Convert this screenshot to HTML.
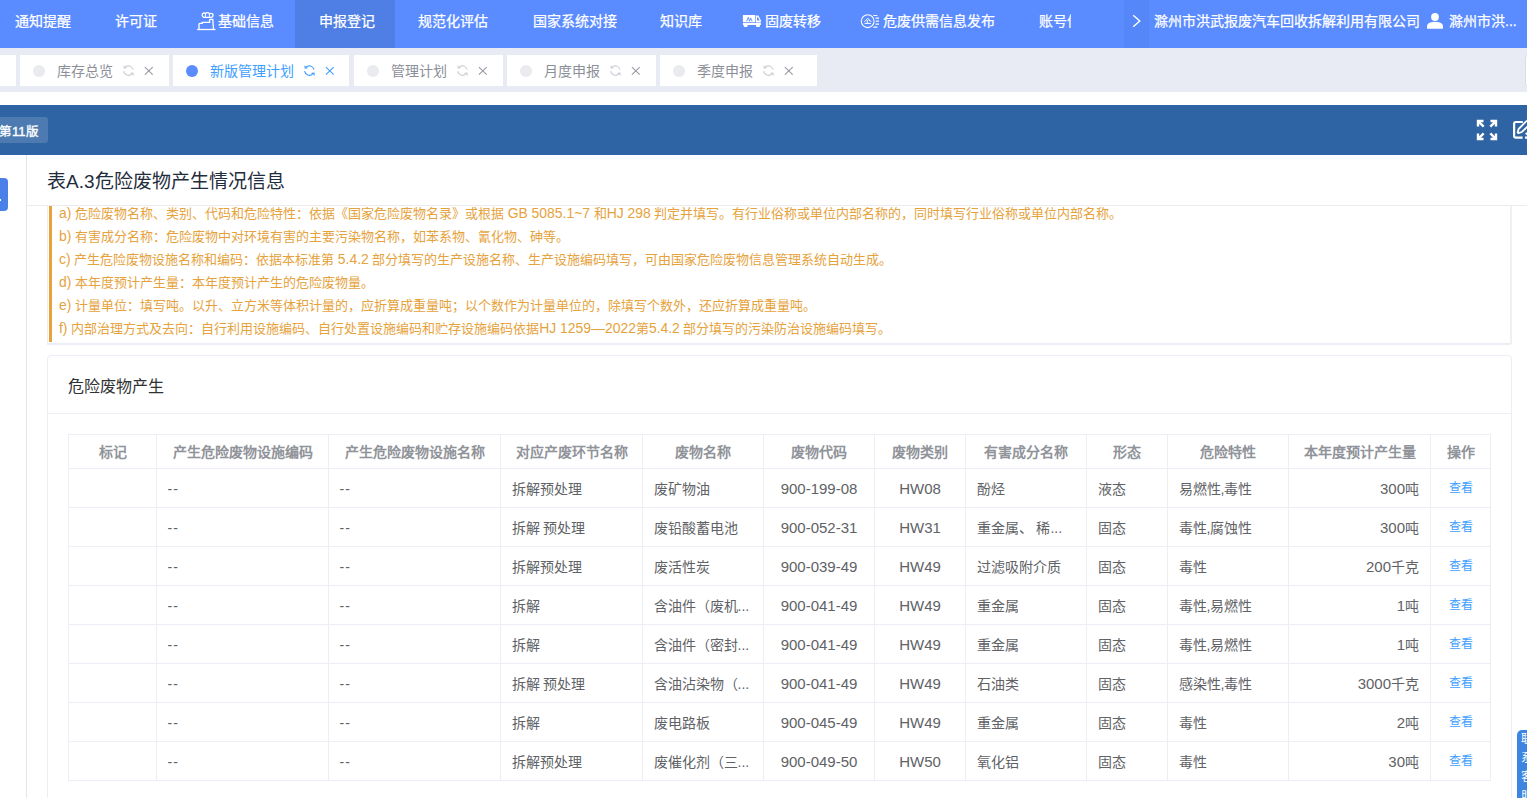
<!DOCTYPE html>
<html lang="zh-CN"><head><meta charset="utf-8"><title>page</title>
<style>
*{box-sizing:border-box;margin:0;padding:0}
html,body{width:1527px;height:798px;overflow:hidden;background:#fff}
body{position:relative;font-family:"Liberation Sans",sans-serif;font-size:14px;color:#606266}
.abs{position:absolute;white-space:nowrap}
#nav{position:absolute;left:0;top:0;width:1527px;height:48px;background:#5a8bff}
.nav{position:absolute;top:-3px;height:48px;line-height:48px;white-space:nowrap;-webkit-text-stroke:0.25px #fff;color:#fff;font-size:14px}
#tabs{position:absolute;left:0;top:48px;width:1527px;height:44px;background:#e8ebf3}
.tab{position:absolute;top:7px;height:31px;background:#fff}
.tab .dot{position:absolute;left:13px;top:10px;width:12px;height:12px;border-radius:50%;background:#eaebef}
.tab .tt{position:absolute;left:37px;top:0.5px;line-height:31px;font-size:14px;color:#8c8c8c}
.tab svg{position:absolute;top:0}
#bar{position:absolute;left:0;top:105px;width:1527px;height:50px;background:#2e64a4}
.cell{position:absolute;display:flex;align-items:center;white-space:nowrap;overflow:hidden}
.hl{position:absolute;height:1px;background:#ebeef5}
.vl{position:absolute;width:1px;background:#ebeef5}
.l{font-size:1.072em;}
.note{position:absolute;left:59px;font-size:13px;color:#e6a23c;line-height:23px;white-space:nowrap}
</style></head><body>

<div id="nav">
<div class="abs" style="left:295px;top:0;width:100px;height:48px;background:#4f7ee4"></div>
<div class="abs" style="left:1124px;top:0;width:25px;height:48px;background:#5587f8"></div>
<div class="nav" style="left:15px">通知提醒</div>
<div class="nav" style="left:115px">许可证</div>
<div class="nav" style="left:218px">基础信息</div>
<div class="nav" style="left:319px">申报登记</div>
<div class="nav" style="left:418px">规范化评估</div>
<div class="nav" style="left:533px">国家系统对接</div>
<div class="nav" style="left:660px">知识库</div>
<div class="nav" style="left:765px">固废转移</div>
<div class="nav" style="left:883px">危废供需信息发布</div>
<div class="nav" style="left:1039px;width:32px;overflow:hidden">账号信息</div>
<div class="nav" style="left:1154px">滁州市洪武报废汽车回收拆解利用有限公司</div>
<div class="nav" style="left:1449px">滁州市洪...</div>
<svg class="abs" style="left:192px;top:8px" width="30" height="30" viewBox="0 0 30 30" fill="none" stroke="#fff" stroke-width="1.3">
<path d="M5.2 21.5H23.5"/><path d="M7 21.5V16.2Q7 15.3 8 15.3H10.3V14.3H17.6V12Q17.6 11.3 18.5 11.3H20.8L21.5 21.5"/>
<path d="M11.8 9.3A2.3 2.3 0 0 1 11.8 4.9Q12.9 4.9 13.4 5.6Q14.1 4.6 15.4 4.6Q16.8 4.6 17.4 5.7Q18 5.3 18.9 5.3A2 2 0 0 1 19.2 9.3Z"/><path d="M13.4 5.6V9.3M17.4 5.7V9.3" stroke-width="1"/></svg>
<svg class="abs" style="left:738px;top:8px" width="30" height="30" viewBox="0 0 30 30">
<path fill="#fff" d="M5.4 7H17.2V14.3H4.9V7.5Q4.9 7 5.4 7Z"/>
<path fill="#fff" d="M17.8 7.4H20.3L22.9 12.2V14.4H17.8Z"/>
<path fill="#5a8bff" d="M19 9.2H20L21.6 12.6H19Z"/>
<path fill="none" stroke="#5a8bff" stroke-width="0.9" d="M8.6 13.3L10.3 9.2L11.6 13.3M11.4 13.3L12.7 9.9L14 13.3"/>
<rect x="4.9" y="14.9" width="18" height="2.1" rx="0.5" fill="#fff"/>
<rect x="5.6" y="16.5" width="4" height="2.4" rx="1" fill="#fff"/><rect x="18" y="16.5" width="4" height="2.4" rx="1" fill="#fff"/>
</svg>
<svg class="abs" style="left:856px;top:8px" width="30" height="30" viewBox="0 0 30 30" fill="none" stroke="#fff" stroke-width="1.1">
<circle cx="11.7" cy="13.2" r="6.4"/>
<path d="M8.4 13.8L11.8 10.3L15.2 13.8M11.3 12.2V15.3M12.6 12.2L14 12.9M8.6 15.4H15" stroke-width="1"/>
<path d="M17.3 7.5H21.3M19.5 10.1H23M19.8 13.2H23M19.5 16.2H23M17.3 19.2H21.3" stroke-width="1.2"/>
</svg>
<svg class="abs" style="left:1128px;top:12px" width="18" height="22" viewBox="0 0 18 22" fill="none" stroke="#fff" stroke-width="1.4"><path d="M5.2 3.2L11.8 9L5.2 14.8"/></svg>
<svg class="abs" style="left:1425px;top:10px" width="20" height="22" viewBox="0 0 20 22" fill="#fff"><circle cx="10" cy="7" r="3.9"/><path d="M2 18.7V16.5Q2 13.2 6 12.2Q8 11.7 10 11.7Q12 11.7 14 12.2Q18 13.2 18 16.5V18.7Z"/></svg>
</div>
<div id="tabs">
<div class="tab" style="left:-133px;width:149px"><div class="dot" style="background:#eaebef"></div><div class="tt" style="color:#8b8f98">库存总览</div>
<svg style="left:103px" width="14" height="31" viewBox="0 0 14 31" fill="none" stroke="#c9cdd4" stroke-width="1.1"><path d="M1.7 12.4A4.9 4.9 0 0 1 10 14.6"/><path d="M0.9 10.7L1.2 13.1L3.6 12.7"/><path d="M0.6 16.2A4.9 4.9 0 0 0 8.7 19.1"/><path d="M10.2 20.6L10 18.1L7.6 18.4"/></svg>
<svg style="left:123px" width="12" height="31" viewBox="0 0 12 31" fill="none" stroke="#959aa3" stroke-width="1.1"><path d="M1.9 12.1L9.7 19.6M9.7 12.1L1.9 19.6"/></svg>
</div>
<div class="tab" style="left:20px;width:149px"><div class="dot" style="background:#eaebef"></div><div class="tt" style="color:#8b8f98">库存总览</div>
<svg style="left:103px" width="14" height="31" viewBox="0 0 14 31" fill="none" stroke="#c9cdd4" stroke-width="1.1"><path d="M1.7 12.4A4.9 4.9 0 0 1 10 14.6"/><path d="M0.9 10.7L1.2 13.1L3.6 12.7"/><path d="M0.6 16.2A4.9 4.9 0 0 0 8.7 19.1"/><path d="M10.2 20.6L10 18.1L7.6 18.4"/></svg>
<svg style="left:123px" width="12" height="31" viewBox="0 0 12 31" fill="none" stroke="#959aa3" stroke-width="1.1"><path d="M1.9 12.1L9.7 19.6M9.7 12.1L1.9 19.6"/></svg>
</div>
<div class="tab" style="left:173px;width:176px"><div class="dot" style="background:#5a8bff"></div><div class="tt" style="color:#409eff">新版管理计划</div>
<svg style="left:131px" width="14" height="31" viewBox="0 0 14 31" fill="none" stroke="#409eff" stroke-width="1.1"><path d="M1.7 12.4A4.9 4.9 0 0 1 10 14.6"/><path d="M0.9 10.7L1.2 13.1L3.6 12.7"/><path d="M0.6 16.2A4.9 4.9 0 0 0 8.7 19.1"/><path d="M10.2 20.6L10 18.1L7.6 18.4"/></svg>
<svg style="left:151px" width="12" height="31" viewBox="0 0 12 31" fill="none" stroke="#409eff" stroke-width="1.1"><path d="M1.9 12.1L9.7 19.6M9.7 12.1L1.9 19.6"/></svg>
</div>
<div class="tab" style="left:354px;width:149px"><div class="dot" style="background:#eaebef"></div><div class="tt" style="color:#8b8f98">管理计划</div>
<svg style="left:103px" width="14" height="31" viewBox="0 0 14 31" fill="none" stroke="#c9cdd4" stroke-width="1.1"><path d="M1.7 12.4A4.9 4.9 0 0 1 10 14.6"/><path d="M0.9 10.7L1.2 13.1L3.6 12.7"/><path d="M0.6 16.2A4.9 4.9 0 0 0 8.7 19.1"/><path d="M10.2 20.6L10 18.1L7.6 18.4"/></svg>
<svg style="left:123px" width="12" height="31" viewBox="0 0 12 31" fill="none" stroke="#959aa3" stroke-width="1.1"><path d="M1.9 12.1L9.7 19.6M9.7 12.1L1.9 19.6"/></svg>
</div>
<div class="tab" style="left:507px;width:149px"><div class="dot" style="background:#eaebef"></div><div class="tt" style="color:#8b8f98">月度申报</div>
<svg style="left:103px" width="14" height="31" viewBox="0 0 14 31" fill="none" stroke="#c9cdd4" stroke-width="1.1"><path d="M1.7 12.4A4.9 4.9 0 0 1 10 14.6"/><path d="M0.9 10.7L1.2 13.1L3.6 12.7"/><path d="M0.6 16.2A4.9 4.9 0 0 0 8.7 19.1"/><path d="M10.2 20.6L10 18.1L7.6 18.4"/></svg>
<svg style="left:123px" width="12" height="31" viewBox="0 0 12 31" fill="none" stroke="#959aa3" stroke-width="1.1"><path d="M1.9 12.1L9.7 19.6M9.7 12.1L1.9 19.6"/></svg>
</div>
<div class="tab" style="left:660px;width:157px"><div class="dot" style="background:#eaebef"></div><div class="tt" style="color:#8b8f98">季度申报</div>
<svg style="left:103px" width="14" height="31" viewBox="0 0 14 31" fill="none" stroke="#c9cdd4" stroke-width="1.1"><path d="M1.7 12.4A4.9 4.9 0 0 1 10 14.6"/><path d="M0.9 10.7L1.2 13.1L3.6 12.7"/><path d="M0.6 16.2A4.9 4.9 0 0 0 8.7 19.1"/><path d="M10.2 20.6L10 18.1L7.6 18.4"/></svg>
<svg style="left:123px" width="12" height="31" viewBox="0 0 12 31" fill="none" stroke="#959aa3" stroke-width="1.1"><path d="M1.9 12.1L9.7 19.6M9.7 12.1L1.9 19.6"/></svg>
</div>
<div class="abs" style="left:1525px;top:6px;width:10px;height:33px;border:1px solid #d8dce5;border-radius:4px;background:#fff"></div>
</div>
<div id="bar">
<div class="abs" style="left:-4px;top:12px;width:52px;height:26px;border-radius:3px;background:rgba(255,255,255,0.15)"></div>
<div class="abs" style="left:-1px;top:13.5px;height:26px;line-height:26px;font-size:12.5px;-webkit-text-stroke:0.35px #fff;color:#fff">第<span style="font-size:13px">11</span>版</div>
<svg class="abs" style="left:1475px;top:13px" width="24" height="24" viewBox="0 0 24 24" fill="none" stroke="#fff" stroke-width="2.4">
<path d="M3 8.5V3H8.5M3 3L8.7 8.7"/><path d="M15.5 3H21V8.5M21 3L15.3 8.7"/><path d="M3 15.5V21H8.5M3 21L8.7 15.3"/><path d="M21 15.5V21H15.5M21 21L15.3 15.3"/></svg>
<svg class="abs" style="left:1507px;top:8px" width="20" height="32" viewBox="0 0 20 32" fill="none" stroke="#fff" stroke-width="2.2">
<path d="M15.8 9H9Q7.1 9 7.1 10.9V22.7Q7.1 24.6 9 24.6H15.6M18 24.6H21"/><path d="M10.5 20.3L11.6 16L20 7.6M10.5 20.3L14.9 19L21.5 12.4" stroke-width="1.8"/><path d="M18.6 20L20.5 21.5" stroke-width="1.8"/></svg>
</div>
<div class="abs" style="left:26px;top:155px;width:1px;height:643px;background:#e6e6e6"></div>
<div class="abs" style="left:-4px;top:178px;width:12px;height:33px;border-radius:4px;background:#4a80e8"></div>
<div class="abs" style="left:0;top:198.5px;width:1.3px;height:2px;background:#fff"></div>
<div class="abs" style="left:47px;top:170px;font-size:19px;line-height:24px;color:#1f2d3d">表A.3危险废物产生情况信息</div>
<div class="abs" style="left:27px;top:205px;width:1500px;height:1px;background:#ececec"></div>
<div class="abs" style="left:47px;top:206px;width:1464px;height:138px;border-left:1px solid #ebeef5"></div>
<div class="abs" style="left:49px;top:206px;width:3px;height:136px;background:#e6a23c"></div>
<div class="abs" style="left:47px;top:343px;width:1464px;height:2px;background:#ebeef5"></div>
<div class="abs" style="left:1510px;top:206px;width:2px;height:138px;background:#f0f0f0"></div>
<div class="note" style="top:202px"><span class="l">a)</span> 危险废物名称、类别、代码和危险特性：依据《国家危险废物名录》或根据 <span class="l">GB 5085.1~7</span> 和<span class="l">HJ 298</span> 判定并填写。有行业俗称或单位内部名称的，同时填写行业俗称或单位内部名称。</div>
<div class="note" style="top:225px"><span class="l">b)</span> 有害成分名称：危险废物中对环境有害的主要污染物名称，如苯系物、氰化物、砷等。</div>
<div class="note" style="top:248px"><span class="l">c)</span> 产生危险废物设施名称和编码：依据本标准第 <span class="l">5.4.2</span> 部分填写的生产设施名称、生产设施编码填写，可由国家危险废物信息管理系统自动生成。</div>
<div class="note" style="top:271px"><span class="l">d)</span> 本年度预计产生量：本年度预计产生的危险废物量。</div>
<div class="note" style="top:294px"><span class="l">e)</span> 计量单位：填写吨。以升、立方米等体积计量的，应折算成重量吨；以个数作为计量单位的，除填写个数外，还应折算成重量吨。</div>
<div class="note" style="top:317px"><span class="l">f)</span> 内部治理方式及去向：自行利用设施编码、自行处置设施编码和贮存设施编码依据<span class="l">HJ 1259—2022</span>第<span class="l">5.4.2</span> 部分填写的污染防治设施编码填写。</div>
<div class="abs" style="left:47px;top:355px;width:1465px;height:460px;border:1px solid #ebeef5;border-radius:4px"></div>
<div class="abs" style="left:68px;top:374.5px;font-size:16px;line-height:24px;color:#303133">危险废物产生</div>
<div class="abs" style="left:48px;top:413px;width:1463px;height:1px;background:#ebeef5"></div>
<div class="hl" style="left:68px;top:434px;width:1423px"></div>
<div class="hl" style="left:68px;top:468px;width:1423px"></div>
<div class="hl" style="left:68px;top:507px;width:1423px"></div>
<div class="hl" style="left:68px;top:546px;width:1423px"></div>
<div class="hl" style="left:68px;top:585px;width:1423px"></div>
<div class="hl" style="left:68px;top:624px;width:1423px"></div>
<div class="hl" style="left:68px;top:663px;width:1423px"></div>
<div class="hl" style="left:68px;top:702px;width:1423px"></div>
<div class="hl" style="left:68px;top:741px;width:1423px"></div>
<div class="hl" style="left:68px;top:780px;width:1423px"></div>
<div class="vl" style="left:68px;top:434px;height:347px"></div>
<div class="vl" style="left:156px;top:434px;height:347px"></div>
<div class="vl" style="left:328px;top:434px;height:347px"></div>
<div class="vl" style="left:500px;top:434px;height:347px"></div>
<div class="vl" style="left:642px;top:434px;height:347px"></div>
<div class="vl" style="left:763px;top:434px;height:347px"></div>
<div class="vl" style="left:874px;top:434px;height:347px"></div>
<div class="vl" style="left:965px;top:434px;height:347px"></div>
<div class="vl" style="left:1086px;top:434px;height:347px"></div>
<div class="vl" style="left:1167px;top:434px;height:347px"></div>
<div class="vl" style="left:1288px;top:434px;height:347px"></div>
<div class="vl" style="left:1430px;top:434px;height:347px"></div>
<div class="vl" style="left:1490px;top:434px;height:347px"></div>
<div class="cell" style="left:69px;top:435px;width:87px;height:33px;padding-bottom:2px;justify-content:center;font-weight:bold;color:#909399">标记</div>
<div class="cell" style="left:157px;top:435px;width:171px;height:33px;padding-bottom:2px;justify-content:center;font-weight:bold;color:#909399">产生危险废物设施编码</div>
<div class="cell" style="left:329px;top:435px;width:171px;height:33px;padding-bottom:2px;justify-content:center;font-weight:bold;color:#909399">产生危险废物设施名称</div>
<div class="cell" style="left:501px;top:435px;width:141px;height:33px;padding-bottom:2px;justify-content:center;font-weight:bold;color:#909399">对应产废环节名称</div>
<div class="cell" style="left:643px;top:435px;width:120px;height:33px;padding-bottom:2px;justify-content:center;font-weight:bold;color:#909399">废物名称</div>
<div class="cell" style="left:764px;top:435px;width:110px;height:33px;padding-bottom:2px;justify-content:center;font-weight:bold;color:#909399">废物代码</div>
<div class="cell" style="left:875px;top:435px;width:90px;height:33px;padding-bottom:2px;justify-content:center;font-weight:bold;color:#909399">废物类别</div>
<div class="cell" style="left:966px;top:435px;width:120px;height:33px;padding-bottom:2px;justify-content:center;font-weight:bold;color:#909399">有害成分名称</div>
<div class="cell" style="left:1087px;top:435px;width:80px;height:33px;padding-bottom:2px;justify-content:center;font-weight:bold;color:#909399">形态</div>
<div class="cell" style="left:1168px;top:435px;width:120px;height:33px;padding-bottom:2px;justify-content:center;font-weight:bold;color:#909399">危险特性</div>
<div class="cell" style="left:1289px;top:435px;width:141px;height:33px;padding-bottom:2px;justify-content:center;font-weight:bold;color:#909399">本年度预计产生量</div>
<div class="cell" style="left:1431px;top:435px;width:59px;height:33px;padding-bottom:2px;justify-content:center;font-weight:bold;color:#909399">操作</div>
<div class="cell" style="left:69px;top:469px;width:87px;height:38px;padding-left:10.5px"></div>
<div class="cell" style="left:157px;top:469px;width:171px;height:38px;padding-left:10.5px"><span style="letter-spacing:1.2px;position:relative;top:1px">--</span></div>
<div class="cell" style="left:329px;top:469px;width:171px;height:38px;padding-left:10.5px"><span style="letter-spacing:1.2px;position:relative;top:1px">--</span></div>
<div class="cell" style="left:501px;top:469px;width:141px;height:38px;padding-left:10.5px">拆解预处理</div>
<div class="cell" style="left:643px;top:469px;width:120px;height:38px;padding-left:10.5px">废矿物油</div>
<div class="cell" style="left:764px;top:469px;width:110px;height:38px;justify-content:center"><span class="l">900-199-08</span></div>
<div class="cell" style="left:875px;top:469px;width:90px;height:38px;justify-content:center"><span class="l">HW08</span></div>
<div class="cell" style="left:966px;top:469px;width:120px;height:38px;padding-left:10.5px">酚烃</div>
<div class="cell" style="left:1087px;top:469px;width:80px;height:38px;padding-left:10.5px">液态</div>
<div class="cell" style="left:1168px;top:469px;width:120px;height:38px;padding-left:10.5px">易燃性,毒性</div>
<div class="cell" style="left:1289px;top:469px;width:141px;height:38px;justify-content:flex-end;padding-right:11px"><span class="l">300</span>吨</div>
<div class="cell" style="left:1431px;top:469px;width:59px;height:38px;justify-content:center;padding-bottom:3px;font-size:12px;color:#409eff">查看</div>
<div class="cell" style="left:69px;top:508px;width:87px;height:38px;padding-left:10.5px"></div>
<div class="cell" style="left:157px;top:508px;width:171px;height:38px;padding-left:10.5px"><span style="letter-spacing:1.2px;position:relative;top:1px">--</span></div>
<div class="cell" style="left:329px;top:508px;width:171px;height:38px;padding-left:10.5px"><span style="letter-spacing:1.2px;position:relative;top:1px">--</span></div>
<div class="cell" style="left:501px;top:508px;width:141px;height:38px;padding-left:10.5px">拆解 预处理</div>
<div class="cell" style="left:643px;top:508px;width:120px;height:38px;padding-left:10.5px">废铅酸蓄电池</div>
<div class="cell" style="left:764px;top:508px;width:110px;height:38px;justify-content:center"><span class="l">900-052-31</span></div>
<div class="cell" style="left:875px;top:508px;width:90px;height:38px;justify-content:center"><span class="l">HW31</span></div>
<div class="cell" style="left:966px;top:508px;width:120px;height:38px;padding-left:10.5px">重金属、 稀...</div>
<div class="cell" style="left:1087px;top:508px;width:80px;height:38px;padding-left:10.5px">固态</div>
<div class="cell" style="left:1168px;top:508px;width:120px;height:38px;padding-left:10.5px">毒性,腐蚀性</div>
<div class="cell" style="left:1289px;top:508px;width:141px;height:38px;justify-content:flex-end;padding-right:11px"><span class="l">300</span>吨</div>
<div class="cell" style="left:1431px;top:508px;width:59px;height:38px;justify-content:center;padding-bottom:3px;font-size:12px;color:#409eff">查看</div>
<div class="cell" style="left:69px;top:547px;width:87px;height:38px;padding-left:10.5px"></div>
<div class="cell" style="left:157px;top:547px;width:171px;height:38px;padding-left:10.5px"><span style="letter-spacing:1.2px;position:relative;top:1px">--</span></div>
<div class="cell" style="left:329px;top:547px;width:171px;height:38px;padding-left:10.5px"><span style="letter-spacing:1.2px;position:relative;top:1px">--</span></div>
<div class="cell" style="left:501px;top:547px;width:141px;height:38px;padding-left:10.5px">拆解预处理</div>
<div class="cell" style="left:643px;top:547px;width:120px;height:38px;padding-left:10.5px">废活性炭</div>
<div class="cell" style="left:764px;top:547px;width:110px;height:38px;justify-content:center"><span class="l">900-039-49</span></div>
<div class="cell" style="left:875px;top:547px;width:90px;height:38px;justify-content:center"><span class="l">HW49</span></div>
<div class="cell" style="left:966px;top:547px;width:120px;height:38px;padding-left:10.5px">过滤吸附介质</div>
<div class="cell" style="left:1087px;top:547px;width:80px;height:38px;padding-left:10.5px">固态</div>
<div class="cell" style="left:1168px;top:547px;width:120px;height:38px;padding-left:10.5px">毒性</div>
<div class="cell" style="left:1289px;top:547px;width:141px;height:38px;justify-content:flex-end;padding-right:11px"><span class="l">200</span>千克</div>
<div class="cell" style="left:1431px;top:547px;width:59px;height:38px;justify-content:center;padding-bottom:3px;font-size:12px;color:#409eff">查看</div>
<div class="cell" style="left:69px;top:586px;width:87px;height:38px;padding-left:10.5px"></div>
<div class="cell" style="left:157px;top:586px;width:171px;height:38px;padding-left:10.5px"><span style="letter-spacing:1.2px;position:relative;top:1px">--</span></div>
<div class="cell" style="left:329px;top:586px;width:171px;height:38px;padding-left:10.5px"><span style="letter-spacing:1.2px;position:relative;top:1px">--</span></div>
<div class="cell" style="left:501px;top:586px;width:141px;height:38px;padding-left:10.5px">拆解</div>
<div class="cell" style="left:643px;top:586px;width:120px;height:38px;padding-left:10.5px">含油件（废机...</div>
<div class="cell" style="left:764px;top:586px;width:110px;height:38px;justify-content:center"><span class="l">900-041-49</span></div>
<div class="cell" style="left:875px;top:586px;width:90px;height:38px;justify-content:center"><span class="l">HW49</span></div>
<div class="cell" style="left:966px;top:586px;width:120px;height:38px;padding-left:10.5px">重金属</div>
<div class="cell" style="left:1087px;top:586px;width:80px;height:38px;padding-left:10.5px">固态</div>
<div class="cell" style="left:1168px;top:586px;width:120px;height:38px;padding-left:10.5px">毒性,易燃性</div>
<div class="cell" style="left:1289px;top:586px;width:141px;height:38px;justify-content:flex-end;padding-right:11px"><span class="l">1</span>吨</div>
<div class="cell" style="left:1431px;top:586px;width:59px;height:38px;justify-content:center;padding-bottom:3px;font-size:12px;color:#409eff">查看</div>
<div class="cell" style="left:69px;top:625px;width:87px;height:38px;padding-left:10.5px"></div>
<div class="cell" style="left:157px;top:625px;width:171px;height:38px;padding-left:10.5px"><span style="letter-spacing:1.2px;position:relative;top:1px">--</span></div>
<div class="cell" style="left:329px;top:625px;width:171px;height:38px;padding-left:10.5px"><span style="letter-spacing:1.2px;position:relative;top:1px">--</span></div>
<div class="cell" style="left:501px;top:625px;width:141px;height:38px;padding-left:10.5px">拆解</div>
<div class="cell" style="left:643px;top:625px;width:120px;height:38px;padding-left:10.5px">含油件（密封...</div>
<div class="cell" style="left:764px;top:625px;width:110px;height:38px;justify-content:center"><span class="l">900-041-49</span></div>
<div class="cell" style="left:875px;top:625px;width:90px;height:38px;justify-content:center"><span class="l">HW49</span></div>
<div class="cell" style="left:966px;top:625px;width:120px;height:38px;padding-left:10.5px">重金属</div>
<div class="cell" style="left:1087px;top:625px;width:80px;height:38px;padding-left:10.5px">固态</div>
<div class="cell" style="left:1168px;top:625px;width:120px;height:38px;padding-left:10.5px">毒性,易燃性</div>
<div class="cell" style="left:1289px;top:625px;width:141px;height:38px;justify-content:flex-end;padding-right:11px"><span class="l">1</span>吨</div>
<div class="cell" style="left:1431px;top:625px;width:59px;height:38px;justify-content:center;padding-bottom:3px;font-size:12px;color:#409eff">查看</div>
<div class="cell" style="left:69px;top:664px;width:87px;height:38px;padding-left:10.5px"></div>
<div class="cell" style="left:157px;top:664px;width:171px;height:38px;padding-left:10.5px"><span style="letter-spacing:1.2px;position:relative;top:1px">--</span></div>
<div class="cell" style="left:329px;top:664px;width:171px;height:38px;padding-left:10.5px"><span style="letter-spacing:1.2px;position:relative;top:1px">--</span></div>
<div class="cell" style="left:501px;top:664px;width:141px;height:38px;padding-left:10.5px">拆解 预处理</div>
<div class="cell" style="left:643px;top:664px;width:120px;height:38px;padding-left:10.5px">含油沾染物（...</div>
<div class="cell" style="left:764px;top:664px;width:110px;height:38px;justify-content:center"><span class="l">900-041-49</span></div>
<div class="cell" style="left:875px;top:664px;width:90px;height:38px;justify-content:center"><span class="l">HW49</span></div>
<div class="cell" style="left:966px;top:664px;width:120px;height:38px;padding-left:10.5px">石油类</div>
<div class="cell" style="left:1087px;top:664px;width:80px;height:38px;padding-left:10.5px">固态</div>
<div class="cell" style="left:1168px;top:664px;width:120px;height:38px;padding-left:10.5px">感染性,毒性</div>
<div class="cell" style="left:1289px;top:664px;width:141px;height:38px;justify-content:flex-end;padding-right:11px"><span class="l">3000</span>千克</div>
<div class="cell" style="left:1431px;top:664px;width:59px;height:38px;justify-content:center;padding-bottom:3px;font-size:12px;color:#409eff">查看</div>
<div class="cell" style="left:69px;top:703px;width:87px;height:38px;padding-left:10.5px"></div>
<div class="cell" style="left:157px;top:703px;width:171px;height:38px;padding-left:10.5px"><span style="letter-spacing:1.2px;position:relative;top:1px">--</span></div>
<div class="cell" style="left:329px;top:703px;width:171px;height:38px;padding-left:10.5px"><span style="letter-spacing:1.2px;position:relative;top:1px">--</span></div>
<div class="cell" style="left:501px;top:703px;width:141px;height:38px;padding-left:10.5px">拆解</div>
<div class="cell" style="left:643px;top:703px;width:120px;height:38px;padding-left:10.5px">废电路板</div>
<div class="cell" style="left:764px;top:703px;width:110px;height:38px;justify-content:center"><span class="l">900-045-49</span></div>
<div class="cell" style="left:875px;top:703px;width:90px;height:38px;justify-content:center"><span class="l">HW49</span></div>
<div class="cell" style="left:966px;top:703px;width:120px;height:38px;padding-left:10.5px">重金属</div>
<div class="cell" style="left:1087px;top:703px;width:80px;height:38px;padding-left:10.5px">固态</div>
<div class="cell" style="left:1168px;top:703px;width:120px;height:38px;padding-left:10.5px">毒性</div>
<div class="cell" style="left:1289px;top:703px;width:141px;height:38px;justify-content:flex-end;padding-right:11px"><span class="l">2</span>吨</div>
<div class="cell" style="left:1431px;top:703px;width:59px;height:38px;justify-content:center;padding-bottom:3px;font-size:12px;color:#409eff">查看</div>
<div class="cell" style="left:69px;top:742px;width:87px;height:38px;padding-left:10.5px"></div>
<div class="cell" style="left:157px;top:742px;width:171px;height:38px;padding-left:10.5px"><span style="letter-spacing:1.2px;position:relative;top:1px">--</span></div>
<div class="cell" style="left:329px;top:742px;width:171px;height:38px;padding-left:10.5px"><span style="letter-spacing:1.2px;position:relative;top:1px">--</span></div>
<div class="cell" style="left:501px;top:742px;width:141px;height:38px;padding-left:10.5px">拆解预处理</div>
<div class="cell" style="left:643px;top:742px;width:120px;height:38px;padding-left:10.5px">废催化剂（三...</div>
<div class="cell" style="left:764px;top:742px;width:110px;height:38px;justify-content:center"><span class="l">900-049-50</span></div>
<div class="cell" style="left:875px;top:742px;width:90px;height:38px;justify-content:center"><span class="l">HW50</span></div>
<div class="cell" style="left:966px;top:742px;width:120px;height:38px;padding-left:10.5px">氧化铝</div>
<div class="cell" style="left:1087px;top:742px;width:80px;height:38px;padding-left:10.5px">固态</div>
<div class="cell" style="left:1168px;top:742px;width:120px;height:38px;padding-left:10.5px">毒性</div>
<div class="cell" style="left:1289px;top:742px;width:141px;height:38px;justify-content:flex-end;padding-right:11px"><span class="l">30</span>吨</div>
<div class="cell" style="left:1431px;top:742px;width:59px;height:38px;justify-content:center;padding-bottom:3px;font-size:12px;color:#409eff">查看</div>
<div class="abs" style="left:1517px;top:730px;width:14px;height:70px;border-radius:5px 0 0 0;background:#3d85e0"></div>
<div class="abs" style="left:1521px;top:730px;width:14px;font-size:12px;line-height:19.2px;color:#fff;white-space:normal;word-break:break-all">联系客服务</div>
</body></html>
